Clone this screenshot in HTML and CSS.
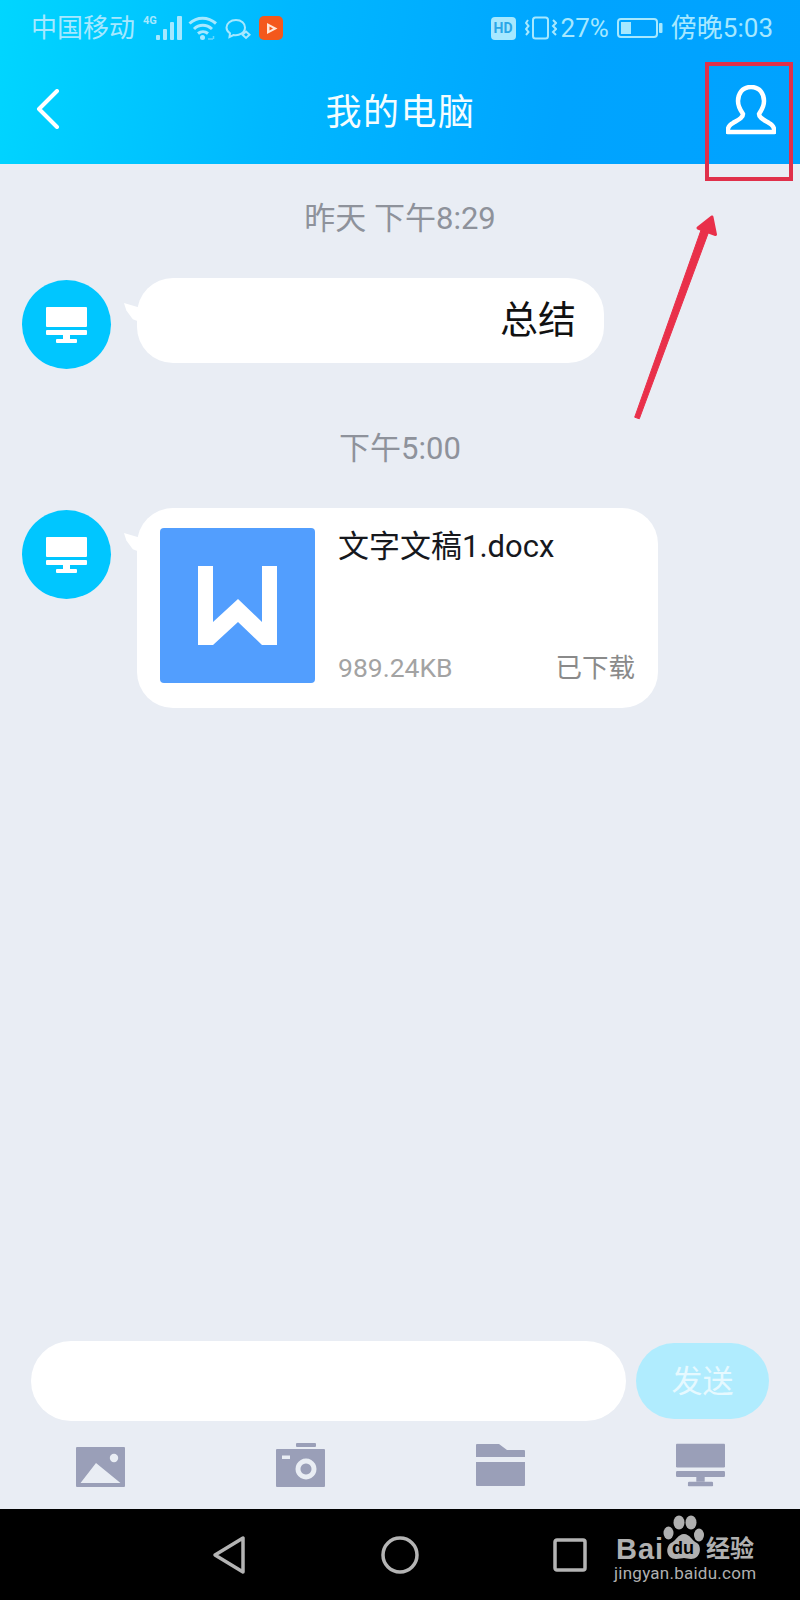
FILE: index.html
```html
<!DOCTYPE html>
<html lang="zh">

<head>
    <meta charset="UTF-8">
    <meta name="viewport" content="width=device-width, initial-scale=1.0">
    <title>我的电脑</title>
    <link rel="stylesheet" href="styles.css">
</head>

<body>
    <svg class="defs" width="0" height="0">
        <symbol id="monitor" viewBox="0 0 41 36">
            <rect x="0" y="0" width="41" height="20" rx="1"></rect>
            <rect x="0" y="23" width="41" height="5" rx="1"></rect>
            <rect x="17" y="28" width="7" height="4"></rect>
            <rect x="10" y="32" width="21" height="4" rx="1"></rect>
        </symbol>
    </svg>

    <div class="page">
        <header class="header">
            <div class="status">
                <div class="status-group">
                    <span class="status-text">中国移动</span>
                    <span class="net">4G</span>
                    <svg class="signal" width="26" height="24" viewBox="0 0 26 24">
                        <rect x="0" y="19" width="4" height="5" rx="1"></rect>
                        <rect x="7" y="13" width="4" height="11" rx="1"></rect>
                        <rect x="14" y="6" width="4" height="18" rx="1"></rect>
                        <rect x="21" y="0" width="5" height="24" rx="1"></rect>
                    </svg>
                    <svg class="wifi" width="30" height="24" viewBox="0 0 30 24">
                        <path d="M1.5 7.500 C9 0.500 20 0.500 28 7.500"></path>
                        <path d="M6 13 C11 8 18.500 8 24 13"></path>
                        <path d="M10 17.500 C13 15 17 15 20 17.500"></path>
                        <circle class="fill" cx="14.500" cy="21.500" r="2.500"></circle>
                        <path class="wifi-arrow" d="M20 23 L25 23 M25.500 20 L25.500 23"></path>
                    </svg>
                    <svg class="wechat" width="26" height="22" viewBox="0 0 26 22">
                        <path d="M11 2 C5.500 2 1.500 5.500 1.500 9.500 C1.500 12 3 14 5 15.300 L4.500 19 L8.500 17 C14 18 20 15 20 9.500 C20 5.500 16.500 2 11 2Z"></path>
                        <path d="M21 13.500 L24.500 16.800 L21 20 L17.500 16.800Z"></path>
                    </svg>
                    <span class="app-badge">
                        <svg width="15" height="15" viewBox="0 0 15 15">
                            <path d="M3 2 L13.500 7.500 L3 13Z M5.500 5.500 L5.500 9.500 L9 7.500Z" fill-rule="evenodd"></path>
                        </svg>
                    </span>
                </div>
                <div class="status-group">
                    <span class="hd">HD</span>
                    <svg class="vibrate" width="32" height="24" viewBox="0 0 32 24">
                        <rect x="8" y="1.500" width="15" height="21" rx="2.500"></rect>
                        <path d="M3 4 L1 7 L3.500 10 L1 13 L3.500 16 L1 19"></path>
                        <path d="M28 4 L31 7 L28 10 L31 13 L28 16 L31 19"></path>
                    </svg>
                    <span class="status-text">27%</span>
                    <svg class="battery" width="46" height="20" viewBox="0 0 46 20">
                        <rect x="1" y="1" width="39" height="18" rx="3"></rect>
                        <rect class="fill" x="4" y="4" width="10" height="12"></rect>
                        <rect class="fill" x="42" y="5" width="3.500" height="10" rx="1"></rect>
                    </svg>
                    <span class="status-text">傍晚5:03</span>
                </div>
            </div>
            <div class="titlebar">
                <svg class="back" width="24" height="40" viewBox="0 0 24 40">
                    <path d="M21 2 L3 20 L21 38"></path>
                </svg>
                <h1>我的电脑</h1>
                <svg class="person" width="50" height="50" viewBox="0 0 50 50">
                    <path d="M25 2 C16 2 12 9 12 16 C12 22 15 26 17 29 C17 33 12 35 7 38 C3 40 1.500 44 1.500 47 L48.500 47 C48.500 44 47 40 43 38 C38 35 33 33 33 29 C35 26 38 22 38 16 C38 9 34 2 25 2Z"></path>
                </svg>
            </div>
        </header>

        <main class="chat">
            <div class="time">昨天 下午8:29</div>
            <div class="msg">
                <div class="avatar"><svg width="41" height="36"><use href="#monitor"></use></svg></div>
                <div class="bubble bubble-text">总结</div>
            </div>

            <div class="time time-second">下午5:00</div>
            <div class="msg">
                <div class="avatar"><svg width="41" height="36"><use href="#monitor"></use></svg></div>
                <div class="bubble bubble-file">
                    <div class="file-icon">
                        <svg width="79" height="79" viewBox="0 0 79 79">
                            <polygon points="0,0 15,0 15,56 40,33 64,56 64,0 79,0 79,79 64,79 40,56 15,79 0,79"></polygon>
                        </svg>
                    </div>
                    <div class="file-info">
                        <div class="file-name">文字文稿1.docx</div>
                        <div class="file-meta">
                            <span class="file-size">989.24KB</span>
                            <span class="file-state">已下载</span>
                        </div>
                    </div>
                </div>
            </div>
        </main>

        <div class="composer">
            <div class="input"></div>
            <div class="send">发送</div>
        </div>

        <div class="tools">
            <svg width="49" height="44" viewBox="0 0 49 44">
                <path fill-rule="evenodd" d="M1 4 H48 Q49 4 49 5 V43 Q49 44 48 44 H1 Q0 44 0 43 V5 Q0 4 1 4Z M4.500 40 H44.500 L20 20Z"></path>
                <circle class="hole" cx="38" cy="15" r="4.200"></circle>
            </svg>
            <svg width="49" height="44" viewBox="0 0 49 44">
                <rect x="20" y="0" width="20" height="4" rx="1"></rect>
                <path fill-rule="evenodd" d="M1 6 H48 Q49 6 49 7 V43 Q49 44 48 44 H1 Q0 44 0 43 V7 Q0 6 1 6Z M30 15.500 a10.500 10.500 0 1 0 0.010 0Z M30 20.500 a5.500 5.500 0 1 1 -0.010 0Z"></path>
                <rect class="hole" x="6" y="12.500" width="8" height="3.500"></rect>
            </svg>
            <svg width="49" height="44" viewBox="0 0 49 44">
                <path d="M1 1 H23 L31 7 H48 Q49 7 49 8 V14 H0 V2 Q0 1 1 1Z"></path>
                <path d="M0 19 H49 V42 Q49 43 48 43 H1 Q0 43 0 42Z"></path>
            </svg>
            <svg width="49" height="44" viewBox="0 0 41 36"><use href="#monitor"></use></svg>
        </div>

        <footer class="navbar">
            <svg class="nav-back" width="36" height="40" viewBox="0 0 36 40">
                <path d="M4 20 L32 3 V37Z"></path>
            </svg>
            <svg class="nav-home" width="38" height="38" viewBox="0 0 38 38">
                <circle cx="19" cy="19" r="17"></circle>
            </svg>
            <svg class="nav-recent" width="34" height="34" viewBox="0 0 34 34">
                <rect x="2" y="2" width="30" height="30" rx="2"></rect>
            </svg>
        </footer>

        <div class="watermark">
            <div class="mark-top">
                <span class="mark-bai">Bai</span>
                <span class="paw">
                    <svg width="44" height="46" viewBox="0 0 44 46">
                        <ellipse cx="17" cy="7.500" rx="5.500" ry="7"></ellipse>
                        <ellipse cx="29" cy="7.500" rx="5.500" ry="7"></ellipse>
                        <ellipse cx="6.500" cy="18" rx="5" ry="6.500"></ellipse>
                        <ellipse cx="37" cy="20" rx="5" ry="6.500"></ellipse>
                        <path d="M22 19 C28 19 30 26 35 28 C40 31 39 44 29 44 C26 44 24 43 22 43 C20 43 17 44 14 44 C4 44 3 32 9 28 C14 26 16 19 22 19Z"></path>
                    </svg>
                    <span class="mark-du">du</span>
                </span>
                <span class="mark-cn">经验</span>
            </div>
            <div class="mark-url">jingyan.baidu.com</div>
        </div>

        <!-- red annotation drawn over the screenshot -->
        <div class="mark-box"></div>
        <svg class="mark-arrow" width="100" height="215" viewBox="0 0 100 215">
            <path class="arrow" d="M14.700 207.200 L19.300 208.800 L90.700 16.400 L83.300 13.600Z"></path>
            <path class="arrow arrow-head" d="M92 7 L78 18 L95.500 24.500Z"></path>
        </svg>
    </div>
</body>

</html>
```

FILE: styles.css
```css
* {
    box-sizing: border-box;
}

body {
    margin: 0;
    font-family: Roboto, "Noto Sans CJK SC", sans-serif;
    background-color: #e9edf4;
}

.defs {
    position: absolute;
}

.page {
    position: relative;
    display: flex;
    flex-direction: column;
    width: 800px;
    height: 1600px;
    overflow: hidden;
}

/* header */
.header {
    height: 164px;
    background: linear-gradient(100deg, #00d6ff 0%, #00b8ff 35%, #00a4ff 70%, #00a2ff 100%);
    color: #fff;
}

.status {
    display: flex;
    justify-content: space-between;
    align-items: center;
    height: 56px;
    padding: 0 27px 0 31px;
    color: #a6e8ff;
}

.status-group {
    display: flex;
    align-items: center;
}

.status-text {
    font-size: 26px;
    line-height: 30px;
}

.net {
    flex-shrink: 0;
    width: 13px;
    margin: -14px 0 0 8px;
    font-size: 11px;
    font-weight: 700;
    line-height: 10px;
}

.signal rect {
    fill: #a6e8ff;
}

.wifi {
    margin-left: 6px;
}

.wifi path {
    fill: none;
    stroke: #a6e8ff;
    stroke-width: 3;
}

.wifi .wifi-arrow {
    stroke-width: 1.5;
    opacity: 0.6;
}

.fill {
    fill: #a6e8ff;
}

.wechat {
    margin: 2px 0 0 7px;
}

.wechat path {
    fill: none;
    stroke: #a6e8ff;
    stroke-width: 2;
}

.app-badge {
    display: flex;
    align-items: center;
    justify-content: center;
    width: 24px;
    height: 24px;
    margin-left: 8px;
    border-radius: 5px;
    background-color: #f4581c;
}

.app-badge path {
    fill: #ffe6d8;
}

.hd {
    width: 25px;
    height: 23px;
    border-radius: 4px;
    background-color: #a6e8ff;
    color: #2aa7e8;
    font-size: 14px;
    font-weight: 700;
    line-height: 23px;
    text-align: center;
}

.vibrate {
    margin: 0 4px 0 9px;
}

.vibrate rect,
.vibrate path {
    fill: none;
    stroke: #a6e8ff;
    stroke-width: 2;
}

.battery {
    margin: 0 8px 0 8px;
}

.battery > rect:first-child {
    fill: none;
    stroke: #a6e8ff;
    stroke-width: 2;
}

.titlebar {
    display: grid;
    grid-template-columns: 1fr auto 1fr;
    align-items: center;
    height: 108px;
    padding: 0 24px 0 36px;
}

h1 {
    margin: 6px 0 0 -11px;
    color: #f4fdff;
    font-size: 36px;
    font-weight: 400;
    letter-spacing: 1.5px;
    line-height: 50px;
}

.back path,
.person path {
    fill: none;
    stroke: #fff;
    stroke-linecap: round;
    stroke-linejoin: round;
    stroke-width: 4;
}

.back {
    margin-top: -2px;
}

.person {
    justify-self: end;
    margin-top: -1px;
}

.person path {
    stroke-width: 4.5;
}

/* chat */
.chat {
    flex: 1;
    padding: 35px 0 0 22px;
}

.time {
    margin-bottom: 39px;
    margin-left: -22px;
    color: #8e929b;
    font-size: 31px;
    line-height: 40px;
    text-align: center;
}

.time-second {
    margin-top: 60px;
}

.msg {
    display: flex;
    align-items: flex-start;
}

.avatar {
    display: flex;
    align-items: center;
    justify-content: center;
    flex-shrink: 0;
    width: 89px;
    height: 89px;
    margin-top: 2px;
    border-radius: 50%;
    background-color: #00c6ff;
}

.avatar svg {
    fill: #fff;
}

.bubble {
    position: relative;
    margin-left: 26px;
    border-radius: 36px;
    background-color: #fff;
}

.bubble::before {
    content: "";
    position: absolute;
    top: 25px;
    left: -13px;
    width: 16px;
    height: 19px;
    background-color: #fff;
    clip-path: polygon(0 0, 100% 25%, 100% 100%, 55% 85%, 15% 40%);
}

.bubble-text {
    width: 467px;
    height: 85px;
    padding-right: 28px;
    color: #111;
    font-size: 38px;
    line-height: 85px;
    text-align: right;
}

.bubble-file {
    display: flex;
    width: 521px;
    height: 200px;
    padding: 20px 23px 23px 23px;
}

.file-icon {
    display: flex;
    align-items: center;
    justify-content: center;
    flex-shrink: 0;
    width: 155px;
    height: 155px;
    border-radius: 4px;
    background-color: #529efe;
}

.file-icon polygon {
    fill: #fff;
}

.file-info {
    display: flex;
    flex: 1;
    flex-direction: column;
    justify-content: space-between;
    margin-left: 23px;
}

.file-name {
    color: #16181d;
    font-size: 31px;
    line-height: 38px;
}

.file-meta {
    display: flex;
    justify-content: space-between;
    font-size: 26.5px;
    line-height: 34px;
}

.file-size {
    color: #a3a3a3;
}

.file-state {
    color: #8a8a8a;
}

/* input area */
.composer {
    display: flex;
    align-items: center;
    gap: 10px;
    padding: 0 31px;
}

.input {
    width: 595px;
    height: 80px;
    border-radius: 40px;
    background-color: #fff;
}

.send {
    width: 133px;
    height: 76px;
    padding-top: 1px;
    border-radius: 38px;
    background-color: #b0ecfe;
    color: #e6f9ff;
    font-size: 31px;
    line-height: 76px;
    text-align: center;
}

.tools {
    display: grid;
    grid-template-columns: repeat(4, 1fr);
    justify-items: center;
    height: 88px;
    padding-top: 22px;
}

.tools svg {
    fill: #9a9fb8;
}

.tools .hole {
    fill: #e9edf4;
}

.navbar {
    display: flex;
    align-items: center;
    justify-content: space-between;
    height: 91px;
    padding: 0 213px 0 211px;
    background-color: #000;
}

.navbar path,
.navbar circle,
.navbar rect {
    fill: none;
    stroke: #b4b4b4;
    stroke-linejoin: round;
    stroke-width: 3.5;
}

/* baidu watermark */
.watermark {
    position: absolute;
    left: 614px;
    top: 1515px;
    color: #b0b0b0;
}

.mark-top {
    display: flex;
    align-items: flex-end;
    height: 49px;
}

.mark-bai {
    width: 48px;
    padding-left: 2px;
    font-family: "Liberation Sans", sans-serif;
    font-size: 29px;
    font-weight: 700;
    letter-spacing: 1px;
    line-height: 30px;
}

.paw {
    position: relative;
    display: block;
    align-self: flex-start;
    width: 44px;
    height: 46px;
}

.paw svg {
    fill: #b0b0b0;
}

.mark-du {
    position: absolute;
    left: 10px;
    top: 23px;
    color: #000;
    font-family: "Liberation Sans", sans-serif;
    font-size: 18px;
    font-weight: 700;
    line-height: 20px;
}

.mark-cn {
    font-size: 24px;
    font-weight: 700;
    line-height: 30px;
}

.mark-url {
    font-size: 17px;
    letter-spacing: 0.25px;
    line-height: 18px;
}

/* red annotation */
.mark-box {
    position: absolute;
    left: 705px;
    top: 62px;
    width: 88px;
    height: 119px;
    border: 4px solid #e0304a;
}

.mark-arrow {
    position: absolute;
    left: 620px;
    top: 210px;
}

.arrow {
    fill: #e9304a;
    stroke: #e9304a;
    stroke-linejoin: round;
    stroke-width: 1;
}

.arrow-head {
    stroke-width: 3;
}
```
